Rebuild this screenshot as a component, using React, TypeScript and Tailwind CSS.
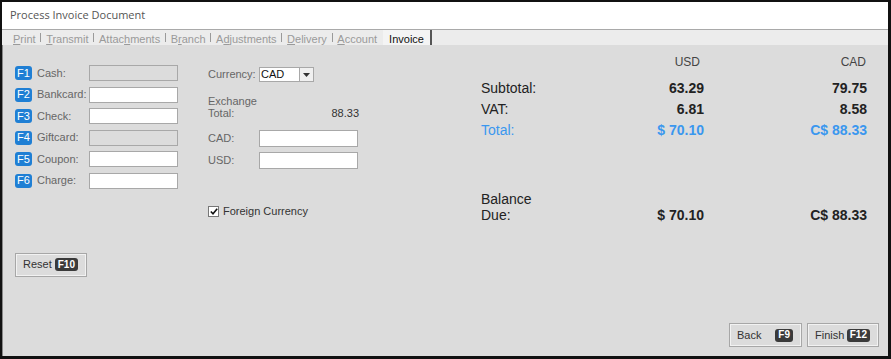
import React from "react";

const Badge = ({ k }: { k: string }) => (
  <span className="inline-flex items-center justify-center h-[14px] min-w-[17px] px-[2px] rounded-[3px] bg-[#1f7fd4] text-white text-[11px] leading-none">
    {k}
  </span>
);

const DarkBadge = ({ k }: { k: string }) => (
  <span className="inline-flex items-center justify-center h-[13px] px-[3px] rounded-[3px] bg-[#3a3a3a] text-white text-[10px] leading-none font-bold">
    {k}
  </span>
);

const Btn = ({ label, k, w }: { label: string; k: string; w: string }) => (
  <div
    className={`flex items-center justify-between h-[24px] ${w} pl-[7px] pr-[8px] border border-[#a7a7a7] shadow-[inset_0_0_0_1px_#f2f2f2] bg-[#dcdcdc] text-[11px] text-[#333]`}
  >
    <span>{label}</span>
    <DarkBadge k={k} />
  </div>
);

const tabs: [string, number][] = [
  ["Print", 0],
  ["Transmit", 0],
  ["Attachments", 5],
  ["Branch", 1],
  ["Adjustments", 1],
  ["Delivery", 0],
  ["Account", 0],
];

function Tab({ t, u }: { t: string; u: number }) {
  return (
    <span>
      {t.slice(0, u)}
      <span className="underline">{t[u]}</span>
      {t.slice(u + 1)}
    </span>
  );
}

export default function App() {
  const rows: [string, string, boolean][] = [
    ["F1", "Cash:", true],
    ["F2", "Bankcard:", false],
    ["F3", "Check:", false],
    ["F4", "Giftcard:", true],
    ["F5", "Coupon:", false],
    ["F6", "Charge:", false],
  ];
  return (
    <div
      className="w-[891px] h-[359px] bg-[#111] pt-[2px] pl-[2px] pr-[3px] pb-[3px] flex flex-col"
      style={{ fontFamily: '"Liberation Sans", Arial, sans-serif' }}
    >
      <div className="h-[27px] bg-white flex items-center pl-[8px] text-[11px] text-[#555]" style={{ fontFamily: '"Open Sans", sans-serif' }}>
        Process Invoice Document
      </div>
      <div className="h-[1px] bg-[#a9a9a9]" />
      <div className="h-[15px] bg-[#ececec] flex items-end pl-[11px] text-[11px] leading-[12px] text-[#9a9a9a]">
        {tabs.map(([t, u], i) => (
          <React.Fragment key={t}>
            <Tab t={t} u={u} />
            {i < tabs.length - 1 ? (
              <span className="mx-[4.75px] mb-[3px] h-[9px] w-[1px] bg-[#9a9a9a]" />
            ) : null}
          </React.Fragment>
        ))}
        <span className="ml-[6px] h-[15px] px-[6px] bg-[#f4f4f4] text-[#111] flex items-end border-r-2 border-[#555]">
          Invoice
        </span>
      </div>
      <div className="flex-1 bg-[#dcdcdc] border-l border-[#888] relative flex">
        {/* left column */}
        <div className="w-[192px] pl-[12px] pt-[20px] flex flex-col">
          <div className="flex flex-col gap-y-[5.5px]">
            {rows.map(([k, l, dis]) => (
              <div key={k} className="flex items-center h-[16px]">
                <Badge k={k} />
                <span className="ml-[5px] w-[52px] text-[11px] text-[#666]">{l}</span>
                <div
                  className={`w-[89px] h-[16px] border ${dis ? "border-[#a8a8a8] bg-[#dcdcdc]" : "border-[#a8a8a8] bg-white"}`}
                />
              </div>
            ))}
          </div>
          <div className="mt-[64px]">
            <Btn label="Reset" k="F10" w="w-[72px]" />
          </div>
        </div>
        {/* middle column */}
        <div className="w-[180px] pl-[13px] pt-[22px] flex flex-col text-[11px] text-[#666]">
          <div className="flex items-center h-[15px]">
            <span className="w-[51px]">Currency:</span>
            <div className="w-[55px] h-[15px] bg-white border border-[#a8a8a8] flex items-center">
              <span className="flex-1 pl-[1px] text-[#111] leading-none">CAD</span>
              <span className="w-[14px] h-full border-l border-[#a8a8a8] bg-[#f0f0f0] flex items-center justify-center">
                <svg width="7" height="4" viewBox="0 0 7 4">
                  <path d="M0 0 H7 L3.5 4 Z" fill="#333" />
                </svg>
              </span>
            </div>
          </div>
          <div className="mt-[13px] flex items-end w-[151px] leading-[12px]">
            <span className="flex-1">
              Exchange
              <br />
              Total:
            </span>
            <span className="text-[#333]">88.33</span>
          </div>
          <div className="mt-[11px] flex items-center h-[17px]">
            <span className="w-[51px]">CAD:</span>
            <div className="w-[99px] h-[17px] bg-white border border-[#a8a8a8]" />
          </div>
          <div className="mt-[5px] flex items-center h-[17px]">
            <span className="w-[51px]">USD:</span>
            <div className="w-[99px] h-[17px] bg-white border border-[#a8a8a8]" />
          </div>
          <div className="mt-[36px] flex items-center h-[13px]">
            <span className="w-[11px] h-[11px] bg-white border border-[#777] flex items-center justify-center">
              <svg width="8" height="7" viewBox="0 0 8 7">
                <path d="M0.8 3.5 L3 5.8 L7.2 0.8" stroke="#111" strokeWidth="1.6" fill="none" />
              </svg>
            </span>
            <span className="ml-[4px] text-[#333]">Foreign Currency</span>
          </div>
        </div>
        {/* right column */}
        <div className="flex-1 pl-[106px] pt-[8px] flex flex-col text-[14px] text-[#222]">
          <div className="flex h-[14px] text-[12px] text-[#444]">
            <span className="w-[60px]" />
            <span className="w-[159px] text-right">USD</span>
            <span className="w-[166px] text-right">CAD</span>
          </div>
          <div className="mt-[13px] flex flex-col gap-y-[5px] leading-[16px]">
            <div className="flex">
              <span className="w-[60px]">Subtotal:</span>
              <span className="w-[163px] text-right font-bold">63.29</span>
              <span className="w-[163px] text-right font-bold">79.75</span>
            </div>
            <div className="flex">
              <span className="w-[60px]">VAT:</span>
              <span className="w-[163px] text-right font-bold">6.81</span>
              <span className="w-[163px] text-right font-bold">8.58</span>
            </div>
            <div className="flex text-[#3a97ef]">
              <span className="w-[60px]">Total:</span>
              <span className="w-[163px] text-right font-bold">$ 70.10</span>
              <span className="w-[163px] text-right font-bold">C$ 88.33</span>
            </div>
          </div>
          <div className="mt-[53px] flex items-end leading-[16px]">
            <span className="w-[60px]">
              Balance
              <br />
              Due:
            </span>
            <span className="w-[163px] text-right font-bold">$ 70.10</span>
            <span className="w-[163px] text-right font-bold">C$ 88.33</span>
          </div>
          <div className="mt-auto mb-[9px] flex justify-end gap-[5px] pr-[9px]">
            <Btn label="Back" k="F9" w="w-[73px]" />
            <Btn label="Finish" k="F12" w="w-[72px]" />
          </div>
        </div>
      </div>
    </div>
  );
}
